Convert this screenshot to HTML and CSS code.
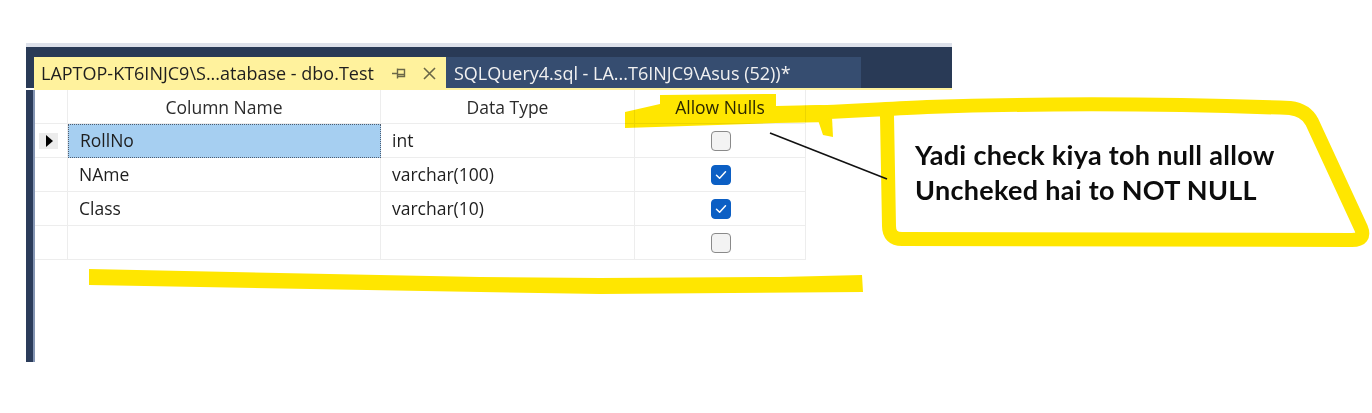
FILE: index.html
```html
<!DOCTYPE html>
<html>
<head>
<meta charset="utf-8">
<title>Table designer</title>
<link rel="stylesheet" href="styles.css">
</head>
<body>
<div class="page">
  <div class="window">
    <div class="topline"></div>
    <div class="tabwell">
      <div class="tab active">
        <span class="tab-title">LAPTOP-KT6INJC9\S...atabase - dbo.Test</span>
        <svg class="pin" width="14" height="12" viewBox="0 0 14 12">
          <path d="M0 6.5H5.5M5.5 1.5V11.5M5.5 2.5H12.5V9.5H5.5M5.5 7.5H12.5" fill="none" stroke="#6a6748" stroke-width="1.4"/>
        </svg>
        <svg class="close" width="13" height="13" viewBox="0 0 13 13">
          <path d="M1 1L12 12M12 1L1 12" fill="none" stroke="#6a6748" stroke-width="1.6"/>
        </svg>
      </div>
      <div class="tab inactive">
        <span class="tab-title">SQLQuery4.sql - LA...T6INJC9\Asus (52))*</span>
      </div>
    </div>
    <div class="tabline"></div>
    <div class="content">
      <div class="grid-wrap">
        <div class="grid">
          <div class="cell rh"></div>
          <div class="cell hd">Column Name</div>
          <div class="cell hd">Data Type</div>
          <div class="cell hd">Allow Nulls</div>

          <div class="cell rh"><span class="marker"><span class="tri"></span></span></div>
          <div class="cell sel">RollNo</div>
          <div class="cell">int</div>
          <div class="cell cb"><span class="box"></span></div>

          <div class="cell rh"></div>
          <div class="cell">NAme</div>
          <div class="cell">varchar(100)</div>
          <div class="cell cb"><span class="box checked"><svg width="12" height="10" viewBox="0 0 12 10"><path d="M1.5 5.2L4.6 8.2L10.5 1.8" fill="none" stroke="#ffffff" stroke-width="1.5" stroke-linecap="round" stroke-linejoin="round"/></svg></span></div>

          <div class="cell rh"></div>
          <div class="cell">Class</div>
          <div class="cell">varchar(10)</div>
          <div class="cell cb"><span class="box checked"><svg width="12" height="10" viewBox="0 0 12 10"><path d="M1.5 5.2L4.6 8.2L10.5 1.8" fill="none" stroke="#ffffff" stroke-width="1.5" stroke-linecap="round" stroke-linejoin="round"/></svg></span></div>

          <div class="cell rh"></div>
          <div class="cell"></div>
          <div class="cell"></div>
          <div class="cell cb"><span class="box"></span></div>
        </div>
      </div>
    </div>
  </div>

  <svg class="ink" width="1372" height="413" viewBox="0 0 1372 413">
    <g fill="#ffe600">
      <polygon points="625,112 660,104 660,95 776,94 776,106 820,105 832,106 832,122 776,123 625,128"/>
      <polygon points="817,117 832,117 833,137 823,135"/>
      <polygon points="89,269 480,277 600,278 780,277 862,275 863,292 600,294 480,292 89,285"/>
    </g>
    <path d="M772 114 C 840 112, 880 109, 927 107 C 1050 103, 1180 104, 1290 108 Q 1306 110, 1312 122 L 1361 228 Q 1366 240, 1352 240 L 902 239 Q 889 239, 889 226 L 887 116"
          fill="none" stroke="#ffe600" stroke-width="14" stroke-linejoin="round" stroke-linecap="round"/>
    <line x1="770" y1="133" x2="887" y2="179" stroke="#111111" stroke-width="1.6"/>
  </svg>

  <div class="note">Yadi check kiya toh null allow<br>Uncheked hai to NOT NULL</div>
</div>
</body>
</html>
```

FILE: styles.css
```css
* { box-sizing: border-box; }

html, body {
  margin: 0;
  padding: 0;
  background: #ffffff;
}

.page {
  position: relative;
  width: 1372px;
  height: 413px;
  overflow: hidden;
  background: #ffffff;
  font-family: "Open Sans", "Noto Sans", sans-serif;
  color: #1e1e1e;
}

.window {
  margin: 43px 0 0 26px;
  width: 926px;
}

.topline {
  height: 4px;
  background: #dde1ea;
}

.tabwell {
  height: 41px;
  background: #293a56;
  padding: 10px 0 0 8px;
  display: flex;
  align-items: stretch;
}

.tab {
  height: 31px;
  display: flex;
  align-items: center;
  white-space: nowrap;
}

.tab-title {
  font-size: 18px;
  line-height: 31px;
  padding-top: 1px;
}

.tab.active {
  width: 412px;
  background: #fff29d;
  padding-left: 7px;
  color: #1e1e1e;
}

.tab.active .pin {
  margin-left: 18px;
  margin-top: 1px;
}

.tab.active .close {
  margin-left: 17px;
  margin-top: 2px;
}

.tab.inactive {
  width: 415px;
  background: #364d70;
  padding-left: 8px;
  color: #f1f1f1;
}

.tabline {
  margin-left: 8px;
  height: 2px;
  background: #fff29d;
}

.content {
  height: 272px;
  border-left: 7px solid #2b3c5a;
  display: flex;
}

.grid-wrap {
  flex: 1;
  border-left: 2px solid #8495b3;
  background: #ffffff;
}

.grid {
  display: grid;
  grid-template-columns: 33px 313px 254px 171px;
  grid-auto-rows: 34px;
  width: 771px;
}

.cell {
  border-right: 1px solid #ededed;
  border-bottom: 1px solid #ededed;
  font-size: 17.5px;
  line-height: 33px;
  padding-left: 11px;
  white-space: nowrap;
}

.cell.hd {
  text-align: center;
  padding-left: 0;
  padding-top: 2px;
  line-height: 31px;
  color: #2b2b2b;
}

.cell.rh {
  padding-left: 0;
  display: flex;
  align-items: center;
}

.marker {
  margin-left: 4px;
  width: 19px;
  height: 16px;
  background: #ececec;
  display: flex;
  align-items: center;
  justify-content: center;
}

.tri {
  width: 0;
  height: 0;
  border-top: 6px solid transparent;
  border-bottom: 6px solid transparent;
  border-left: 7px solid #000000;
  margin-left: 2px;
}

.cell.sel {
  background: #a6cff1;
  border: 1px dotted #4f5d70;
  line-height: 31px;
}

.cell.cb {
  display: flex;
  align-items: center;
  justify-content: center;
  padding-left: 0;
}

.box {
  width: 20px;
  height: 20px;
  border: 1px solid #8a8a8a;
  border-radius: 4px;
  background: #f3f3f3;
  display: flex;
  align-items: center;
  justify-content: center;
  margin-left: 1px;
}

.box.checked {
  background: #0c5fc4;
  border-color: #0c5fc4;
}

.ink {
  position: absolute;
  left: 0;
  top: 0;
  mix-blend-mode: multiply;
  pointer-events: none;
}

.note {
  position: absolute;
  left: 915px;
  top: 137px;
  font-family: Lato, "Open Sans", sans-serif;
  font-weight: 700;
  font-size: 27px;
  line-height: 35px;
  letter-spacing: 0.3px;
  color: #0c0c0c;
  white-space: nowrap;
}
```
